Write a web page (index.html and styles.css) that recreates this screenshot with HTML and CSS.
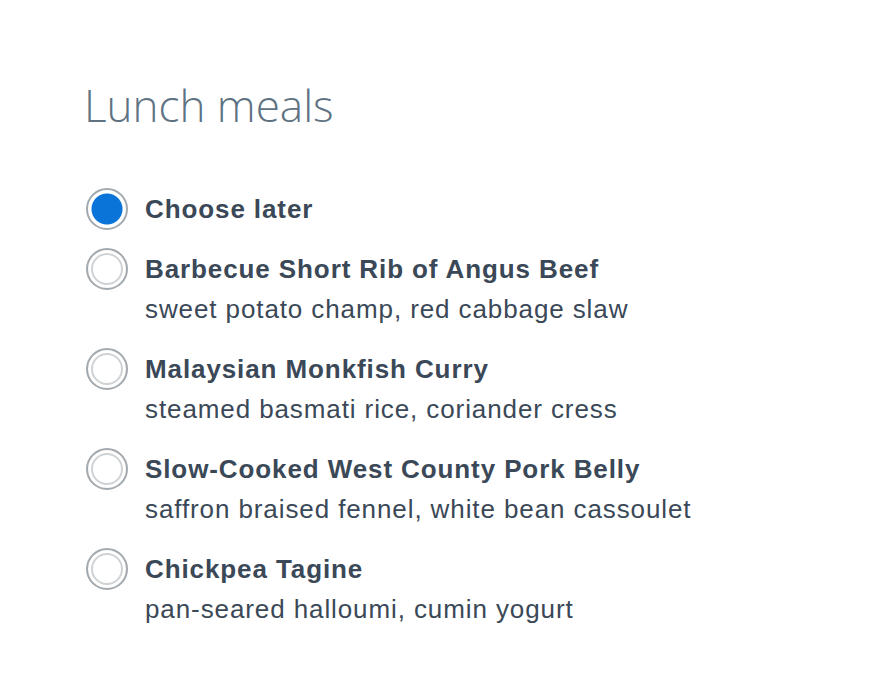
FILE: index.html
```html
<!DOCTYPE html>
<html>
<head>
<meta charset="utf-8">
<link rel="stylesheet" href="styles.css">
</head>
<body>
<div class="page">
  <h1 class="title">Lunch meals</h1>
  <ul class="options">
    <li class="option">
      <span class="radio checked"></span>
      <div class="label"><div class="name">Choose later</div></div>
    </li>
    <li class="option">
      <span class="radio"></span>
      <div class="label"><div class="name">Barbecue Short Rib of Angus Beef</div><div class="desc">sweet potato champ, red cabbage slaw</div></div>
    </li>
    <li class="option">
      <span class="radio"></span>
      <div class="label"><div class="name">Malaysian Monkfish Curry</div><div class="desc">steamed basmati rice, coriander cress</div></div>
    </li>
    <li class="option">
      <span class="radio"></span>
      <div class="label"><div class="name">Slow-Cooked West County Pork Belly</div><div class="desc">saffron braised fennel, white bean cassoulet</div></div>
    </li>
    <li class="option">
      <span class="radio"></span>
      <div class="label"><div class="name">Chickpea Tagine</div><div class="desc">pan-seared halloumi, cumin yogurt</div></div>
    </li>
  </ul>
</div>
</body>
</html>
```
FILE: styles.css
```css
html, body {
  margin: 0;
  padding: 0;
  background: #ffffff;
}
.page {
  padding: 77px 0 0 86px;
}
.title {
  margin: 0 0 56px -2px;
  font-family: "Open Sans", sans-serif;
  font-weight: 300;
  font-size: 44px;
  line-height: 56px;
  color: #5e7282;
}
.options {
  list-style: none;
  margin: 0;
  padding: 0;
  display: flex;
  flex-direction: column;
  gap: 20px;
}
.option {
  display: flex;
  align-items: flex-start;
  gap: 17px;
}
.radio {
  flex: none;
  box-sizing: border-box;
  width: 42px;
  height: 42px;
  margin: -1px 0;
  border-radius: 50%;
  border: 2px solid #a3aaaf;
  box-shadow: inset 0 0 0 3px #ffffff, inset 0 0 0 5px #cfd3d6;
  background: #ffffff;
}
.radio.checked {
  box-shadow: none;
  background: radial-gradient(circle, #0a74d8 0 15px, #ffffff 16px);
}
.label {
  font-family: "Liberation Sans", Arial, sans-serif;
  font-size: 26px;
  line-height: 40px;
  letter-spacing: 0.9px;
  color: #3a4857;
}
.name {
  font-weight: 700;
}
.desc {
  font-weight: 400;
}
```
